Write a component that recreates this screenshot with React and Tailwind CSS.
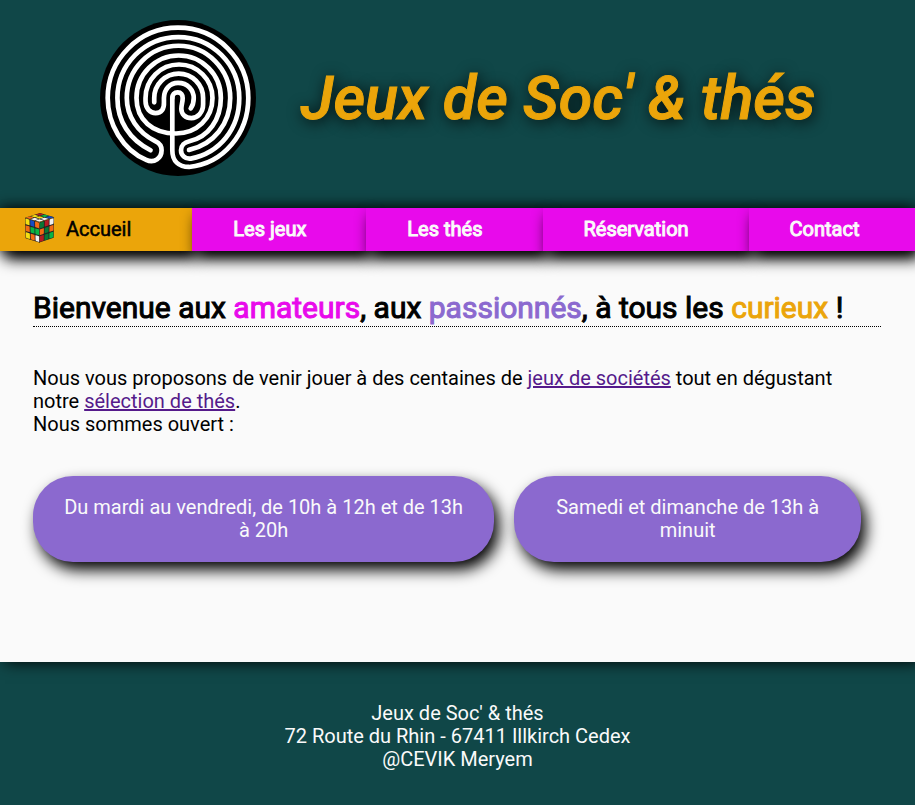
const navItems = ["Les jeux", "Les thés", "Réservation", "Contact"];

const shadow = "shadow-[5px_8px_15px_#000]";

function Labyrinth() {
  return (
    <svg viewBox="19 16 466 466" className="size-[156px] shrink-0" role="img" aria-label="Labyrinthe">
      <circle cx="252" cy="249" r="233" fill="#000" />
      <g fill="none" stroke="#fff" strokeWidth="14" strokeLinecap="round">
        <path d="M235 249V405C235 437 254 455 285 455C388 445 462 355 462 249A210 210 0 0 0 42 249C42 327 87 404 157 434C182 446 203 427 203 405C203 393 195 383 184 378C132 352 99 304 99 249A153.500 155 0 0 1 408 249C408 327 358 388 285 404" />
        <path d="M170 405C107 373 71 318 71 249A182 182 0 0 1 435 249C435 341 377 413 290 430C273 432 261 420 261 405C261 391 271 381 286 378C343 366 380 313 380 249A126 127 0 0 0 128 249C128 314 176 355 246 355C308 355 355 310 355 249A100 100 0 0 0 155 249V259C155 280 169 294 185 294C203 294 211 281 210 262V249C210 224 227 204 252 204C282 204 299 226 299 249C299 262 296 272 290 280" />
        <path d="M181 262V249A73 73 0 0 1 327 249V268C327 293 310 309 292 309C274 309 262 297 262 282C262 268 266 263 266 249C266 239 261 232 251 232C241 232 235 239 235 249" />
      </g>
    </svg>
  );
}

function Face({ colors, transform }) {
  return (
    <g transform={transform}>
      <rect width="3" height="3" fill="#222" />
      {colors.map((color, i) => (
        <rect key={i} x={(i % 3) + 0.08} y={Math.floor(i / 3) + 0.08} width="0.84" height="0.84" rx="0.1" fill={color} />
      ))}
    </g>
  );
}

function Cube() {
  const r = "#b51b22", g = "#08b545", d = "#087735", b = "#174bc2", y = "#f5df12", o = "#f36b13", w = "#f0f0f0";
  return (
    <svg viewBox="0 0 32 32" className="mb-1 size-8" aria-hidden="true">
      <Face colors={[r, g, b, y, y, w, o, w, w]} transform="matrix(4.8 1.4 -5 1.6 16 1)" />
      <Face colors={[y, b, o, o, g, g, y, o, w]} transform="matrix(4.8 1.5 0.2 6.8 1 5.8)" />
      <Face colors={[d, r, w, o, d, o, r, d, g]} transform="matrix(4.8 -1.6 -0.1 6.8 15.6 10.2)" />
    </svg>
  );
}

export default function App() {
  return (
    <div className="flex min-h-screen flex-col bg-[#104748] font-['Roboto',sans-serif] text-xl leading-[23px] text-black">
      <header className="flex items-start justify-center gap-[45px] pt-5 pb-8">
        <Labyrinth />
        <h1 className="self-center text-[61px] leading-[73px] font-medium whitespace-nowrap text-[#eba50a] italic [-webkit-text-stroke:1px_#eba50a] [text-shadow:2px_2px_15px_#000]">
          Jeux de Soc' &amp; thés
        </h1>
      </header>

      <nav className="relative z-10 flex whitespace-nowrap text-[#fafafa] shadow-[0_0_15px_#000]">
        <a href="#accueil" className={`flex h-[43px] items-center gap-2.5 bg-[#eba50a] pr-[61px] pl-6 text-black [-webkit-text-stroke:0.5px] ${shadow}`}>
          <Cube />
          Accueil
        </a>
        {navItems.map((item) => (
          <a key={item} href="#" className={`flex h-[43px] items-center bg-[#e80aeb] pr-[60px] pl-[41px] [-webkit-text-stroke:1px] last:grow last:pr-0 ${shadow}`}>
            {item}
          </a>
        ))}
      </nav>

      <main className="relative grow bg-[#fafafa] pt-[39px] pr-[34px] pb-[100px] pl-[33px] shadow-[5px_0_15px_#000]">
        <h2 className="border-b border-dotted border-black text-[30px] leading-[36px] font-normal [-webkit-text-stroke:1px]">
          Bienvenue aux <span className="text-[#e80aeb]">amateurs</span>, aux{" "}
          <span className="text-[#8b69cf]">passionnés</span>, à tous les{" "}
          <span className="text-[#eba50a]">curieux</span> !
        </h2>
        <p className="mt-10">
          Nous vous proposons de venir jouer à des centaines de{" "}
          <a href="#jeux" className="text-[#551a8b] underline">jeux de sociétés</a> tout en dégustant notre{" "}
          <a href="#thes" className="text-[#551a8b] underline">sélection de thés</a>.
          <br />
          Nous sommes ouvert :
        </p>
        <div className="mt-10 flex gap-5 pr-5 text-center text-[#fafafa]">
          <p className={`flex-[7] rounded-[40px] bg-[#8b69cf] px-[30px] py-5 ${shadow}`}>
            Du mardi au vendredi, de 10h à 12h et de 13h à 20h
          </p>
          <p className={`flex-[5] rounded-[40px] bg-[#8b69cf] px-[30px] py-5 ${shadow}`}>
            Samedi et dimanche de 13h à minuit
          </p>
        </div>
      </main>

      <footer className="pt-10 pb-[34px] text-center text-[#fafafa]">
        <p>Jeux de Soc' &amp; thés</p>
        <p>72 Route du Rhin - 67411 Illkirch Cedex</p>
        <p>@CEVIK Meryem</p>
      </footer>
    </div>
  );
}
